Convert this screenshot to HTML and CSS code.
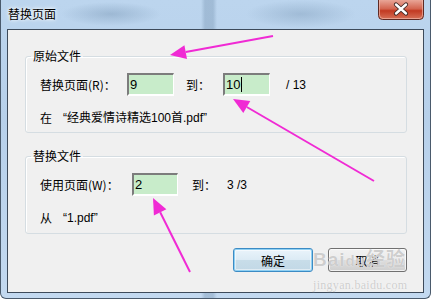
FILE: index.html
```html
<!DOCTYPE html>
<html lang="zh-CN">
<head>
  <meta charset="UTF-8" />
  <title>替换页面</title>
  <link rel="stylesheet" href="styles.css">
</head>
<body>
  <div class="janela">
    <div class="barra-titulo">
      <div class="titulo">替换页面</div>
      <div class="fechar">
        <svg width="46" height="20" viewBox="0 0 46 20">
          <defs>
            <linearGradient id="verm" x1="0" y1="0" x2="0" y2="1">
              <stop offset="0" stop-color="#e9a597"/>
              <stop offset="0.45" stop-color="#d3644f"/>
              <stop offset="0.55" stop-color="#c23a22"/>
              <stop offset="1" stop-color="#d8735a"/>
            </linearGradient>
          </defs>
          <path d="M0.5 0 V15.5 Q0.5 19.5 4.5 19.5 H41.5 Q45.5 19.5 45.5 15.5 V0" fill="url(#verm)" stroke="#5e2a24"/>
          <path d="M1.5 0 V15 Q1.5 18.5 5 18.5 H41 Q44.5 18.5 44.5 15 V0" fill="none" stroke="#f3c3b8" stroke-opacity="0.6"/>
          <path d="M18 4.5 L28 13.5 M28 4.5 L18 13.5" stroke="#3b2624" stroke-width="4.2" stroke-linecap="round"/>
          <path d="M18 4.5 L28 13.5 M28 4.5 L18 13.5" stroke="#ffffff" stroke-width="2.4" stroke-linecap="round"/>
        </svg>
      </div>
    </div>

    <div class="cliente">
      <fieldset class="grupo grupo-1">
        <legend>原始文件</legend>
        <div class="linha">
          <span class="rotulo rotulo-r">替换页面(R)：</span>
          <div class="campo">9</div>
          <span class="ate">到：</span>
          <div class="campo">10<span class="cursor"></span></div>
          <span class="total">/ 13</span>
        </div>
        <div class="linha-texto">
          <span class="prep">在</span>
          <span>“经典爱情诗精选100首.pdf”</span>
        </div>
      </fieldset>

      <fieldset class="grupo grupo-2">
        <legend>替换文件</legend>
        <div class="linha">
          <span class="rotulo rotulo-w">使用页面(W)：</span>
          <div class="campo campo-w">2</div>
          <span class="ate ate-w">到：</span>
          <span>3 /3</span>
        </div>
        <div class="linha-texto">
          <span class="prep">从</span>
          <span>“1.pdf”</span>
        </div>
      </fieldset>

      <div class="botoes">
        <button class="botao padrao">确定</button>
        <button class="botao">取消</button>
      </div>
    </div>

    <div class="marca">
      <div class="marca-logo">Bai<span class="pata">du</span>经验</div>
      <div class="marca-url">jingyan.baidu.com</div>
    </div>

    <svg class="setas" width="431" height="299" viewBox="0 0 431 299">
      <g stroke="#f02ad4" stroke-width="2" fill="#f02ad4">
        <line x1="273" y1="36" x2="185.7" y2="52.1"/>
        <polygon points="170,55 187,59 184.4,45.2" stroke="none"/>
        <line x1="374" y1="181" x2="246.8" y2="107"/>
        <polygon points="233,99 250.3,101 243.3,113.1" stroke="none"/>
        <line x1="190" y1="272" x2="160.2" y2="212.3"/>
        <polygon points="153,198 166.4,209.2 153.9,215.4" stroke="none"/>
      </g>
    </svg>
  </div>
</body>
</html>
```

FILE: styles.css
```css
body {
  margin: 0;
  padding: 0;
  font-family: "Liberation Sans", "Noto Sans CJK SC", sans-serif;
  font-size: 12px;
  color: #000;
}
.janela {
  position: relative;
  width: 431px;
  height: 299px;
  box-sizing: border-box;
  border: 1px solid #4a5a6c;
  border-top: none;
  border-radius: 0 0 6px 6px;
  display: flex;
  flex-direction: column;
  overflow: hidden;
  background:
    radial-gradient(ellipse 50px 12px at 110px 14px, rgba(120,150,180,0.45), transparent),
    radial-gradient(ellipse 55px 14px at 300px 14px, rgba(120,150,180,0.4), transparent),
    linear-gradient(90deg, transparent 200px, rgba(110,140,170,0.35) 204px, rgba(110,140,170,0.35) 212px, transparent 216px),
    linear-gradient(180deg, #bcd5ee 0%, #b7d0ea 40%, #c3d9f0 100%);
}
.barra-titulo {
  height: 29px;
  display: flex;
  align-items: flex-start;
  flex-shrink: 0;
}
.titulo {
  padding: 7px 0 0 7px;
  font-family: "Noto Sans CJK SC", sans-serif;
  font-size: 12px;
  line-height: 14px;
  text-shadow: 0 0 5px #fff, 0 0 3px #fff;
}
.fechar {
  margin-left: auto;
  margin-right: 6px;
  height: 20px;
}
.fechar svg {
  display: block;
}
.cliente {
  flex: 1;
  margin: 0 6px 5px 6px;
  border: 1px solid #3d4a5a;
  background: #f0f0f0;
  padding: 0 16px 0 17px;
  display: flex;
  flex-direction: column;
}
.grupo {
  margin: 0;
  padding: 0 14px 6px 14px;
  border: 1px solid #d5dde2;
  border-radius: 3px;
  box-shadow: inset 1px 1px 0 #fff;
  min-width: 0;
}
.grupo-1 {
  margin-top: 19px;
}
.grupo-2 {
  margin-top: 16px;
  padding-bottom: 7px;
}
legend {
  margin-left: -9px;
  padding: 0 2px;
  line-height: 14px;
  font-family: "Noto Sans CJK SC", sans-serif;
}
.linha {
  display: flex;
  align-items: center;
  height: 23px;
  margin-top: 10px;
  white-space: nowrap;
}
.rotulo {
  font-family: "Noto Sans CJK SC", sans-serif;
}
.rotulo-r {
  width: 87px;
}
.rotulo-w {
  width: 92px;
}
.campo {
  width: 47px;
  height: 23px;
  box-sizing: border-box;
  background: #c8ecca;
  border-top: 2px solid #7c7c7c;
  border-left: 2px solid #7c7c7c;
  border-right: 1px solid #fff;
  border-bottom: 2px solid #fff;
  padding: 2px 0 0 1px;
  line-height: 16px;
  font-size: 13px;
  display: flex;
  align-items: flex-start;
}
.campo-w {
  width: 46px;
}
.cursor {
  display: inline-block;
  width: 1px;
  height: 15px;
  background: #000;
  margin-left: 1px;
}
.ate {
  margin-left: 12px;
  width: 37px;
  font-family: "Noto Sans CJK SC", sans-serif;
}
.ate-w {
  margin-left: 14px;
  width: 35px;
}
.total {
  margin-left: 16px;
}
.linha-texto {
  margin-top: 14px;
  height: 16px;
  line-height: 16px;
  display: flex;
  white-space: nowrap;
}
.prep {
  width: 23px;
  font-family: "Noto Sans CJK SC", sans-serif;
}
.botoes {
  display: flex;
  justify-content: flex-end;
  gap: 15px;
  margin-top: 14px;
}
.botao {
  width: 79px;
  height: 24px;
  padding: 0;
  font-family: "Noto Sans CJK SC", sans-serif;
  font-size: 12px;
  color: #000;
  border: 1px solid #707070;
  border-radius: 3px;
  background: linear-gradient(180deg, #f2f2f2 0%, #ebebeb 48%, #dddddd 52%, #cfcfcf 100%);
  box-shadow: inset 0 0 0 1px rgba(255,255,255,0.7);
}
.botao.padrao {
  width: 80px;
  border-color: #3c8bc4;
  background: linear-gradient(180deg, #eaf4fb 0%, #dcebf5 48%, #c8dde9 52%, #c2d8e6 100%);
  box-shadow: inset 0 0 0 1px #8fd0f3, inset 0 0 0 2px rgba(255,255,255,0.5);
}
.marca {
  position: absolute;
  left: 312px;
  top: 248px;
  color: rgba(190,190,190,0.75);
  text-shadow: 0 0 1px #fff;
  pointer-events: none;
}
.marca-logo {
  font-family: "Liberation Sans", "Noto Sans CJK SC", sans-serif;
  font-size: 19px;
  font-weight: bold;
  line-height: 24px;
  letter-spacing: 1px;
}
.pata {
  font-size: 15px;
}
.marca-url {
  font-family: "Liberation Serif", serif;
  font-size: 12px;
  line-height: 14px;
  margin-top: 5px;
  letter-spacing: 0.3px;
}
.setas {
  position: absolute;
  left: -1px;
  top: 0;
  pointer-events: none;
}
```
